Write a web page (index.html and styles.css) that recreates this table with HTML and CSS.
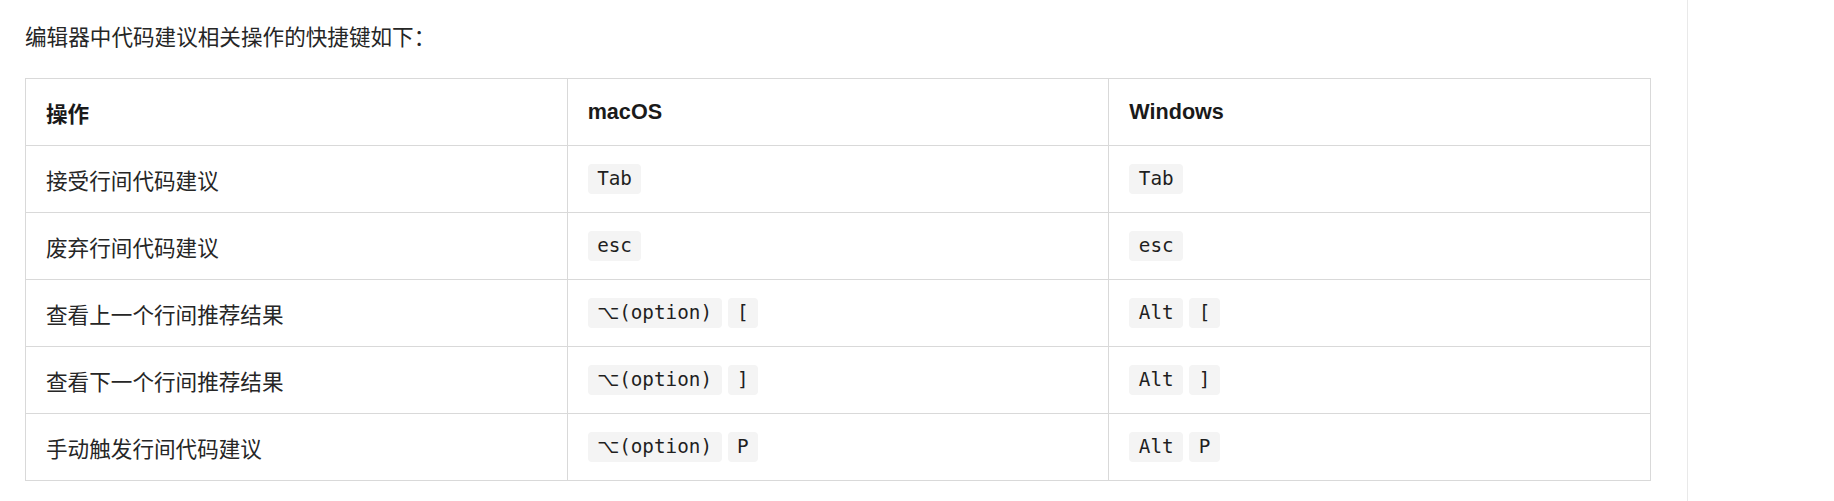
FILE: index.html
```html
<!DOCTYPE html>
<html lang="zh-CN">
<head>
<meta charset="utf-8">
<title>快捷键</title>
<link rel="stylesheet" href="styles.css">
</head>
<body>
<div class="layout">
  <main class="content">
    <p class="intro">编辑器中代码建议相关操作的快捷键如下：</p>
    <table class="shortcuts">
      <thead>
        <tr><th>操作</th><th>macOS</th><th>Windows</th></tr>
      </thead>
      <tbody>
        <tr>
          <td>接受行间代码建议</td>
          <td><span class="keys"><code>Tab</code></span></td>
          <td><span class="keys"><code>Tab</code></span></td>
        </tr>
        <tr>
          <td>废弃行间代码建议</td>
          <td><span class="keys"><code>esc</code></span></td>
          <td><span class="keys"><code>esc</code></span></td>
        </tr>
        <tr>
          <td>查看上一个行间推荐结果</td>
          <td><span class="keys"><code><span class="opt">⌥</span>(option)</code><code>[</code></span></td>
          <td><span class="keys"><code>Alt</code><code>[</code></span></td>
        </tr>
        <tr>
          <td>查看下一个行间推荐结果</td>
          <td><span class="keys"><code><span class="opt">⌥</span>(option)</code><code>]</code></span></td>
          <td><span class="keys"><code>Alt</code><code>]</code></span></td>
        </tr>
        <tr>
          <td>手动触发行间代码建议</td>
          <td><span class="keys"><code><span class="opt">⌥</span>(option)</code><code>P</code></span></td>
          <td><span class="keys"><code>Alt</code><code>P</code></span></td>
        </tr>
      </tbody>
    </table>
  </main>
  <aside class="sidebar"></aside>
</div>
</body>
</html>
```
FILE: styles.css
```css
html, body {
  margin: 0;
  padding: 0;
  background: #ffffff;
}
body {
  font-family: "Liberation Sans", "Noto Sans CJK SC", sans-serif;
  font-size: 21.6px;
  color: #1f1f1f;
}
.layout {
  display: flex;
  min-height: 501px;
}
.content {
  box-sizing: border-box;
  width: 1687px;
  padding: 21px 36px 0 25px;
}
.sidebar {
  flex: 1;
  border-left: 1px solid #e9e9e9;
}
.intro {
  margin: 0;
  line-height: 34px;
  color: #262626;
}
.shortcuts {
  margin-top: 23px;
  width: 1626px;
  table-layout: fixed;
  border-collapse: collapse;
}
.shortcuts th,
.shortcuts td {
  border: 1px solid #d9d9d9;
  height: 67px;
  padding: 0 20px;
  text-align: left;
  vertical-align: middle;
  box-sizing: border-box;
}
.shortcuts th {
  font-weight: bold;
  color: #1a1a1a;
}
.shortcuts td {
  color: #262626;
}
.keys {
  display: inline-flex;
  gap: 6px;
  vertical-align: middle;
}
code {
  display: inline-block;
  font-family: "DejaVu Sans Mono", "Liberation Mono", monospace;
  font-size: 19.3px;
  line-height: 30px;
  height: 30px;
  padding: 0 9.5px;
  background: #f4f4f4;
  border-radius: 4px;
  color: #1f1f1f;
}
.opt {
  display: inline-block;
  vertical-align: top;
  width: 22px;
  height: 30px;
  line-height: 30px;
  overflow: hidden;
  font-family: "DejaVu Sans", sans-serif;
}
```
